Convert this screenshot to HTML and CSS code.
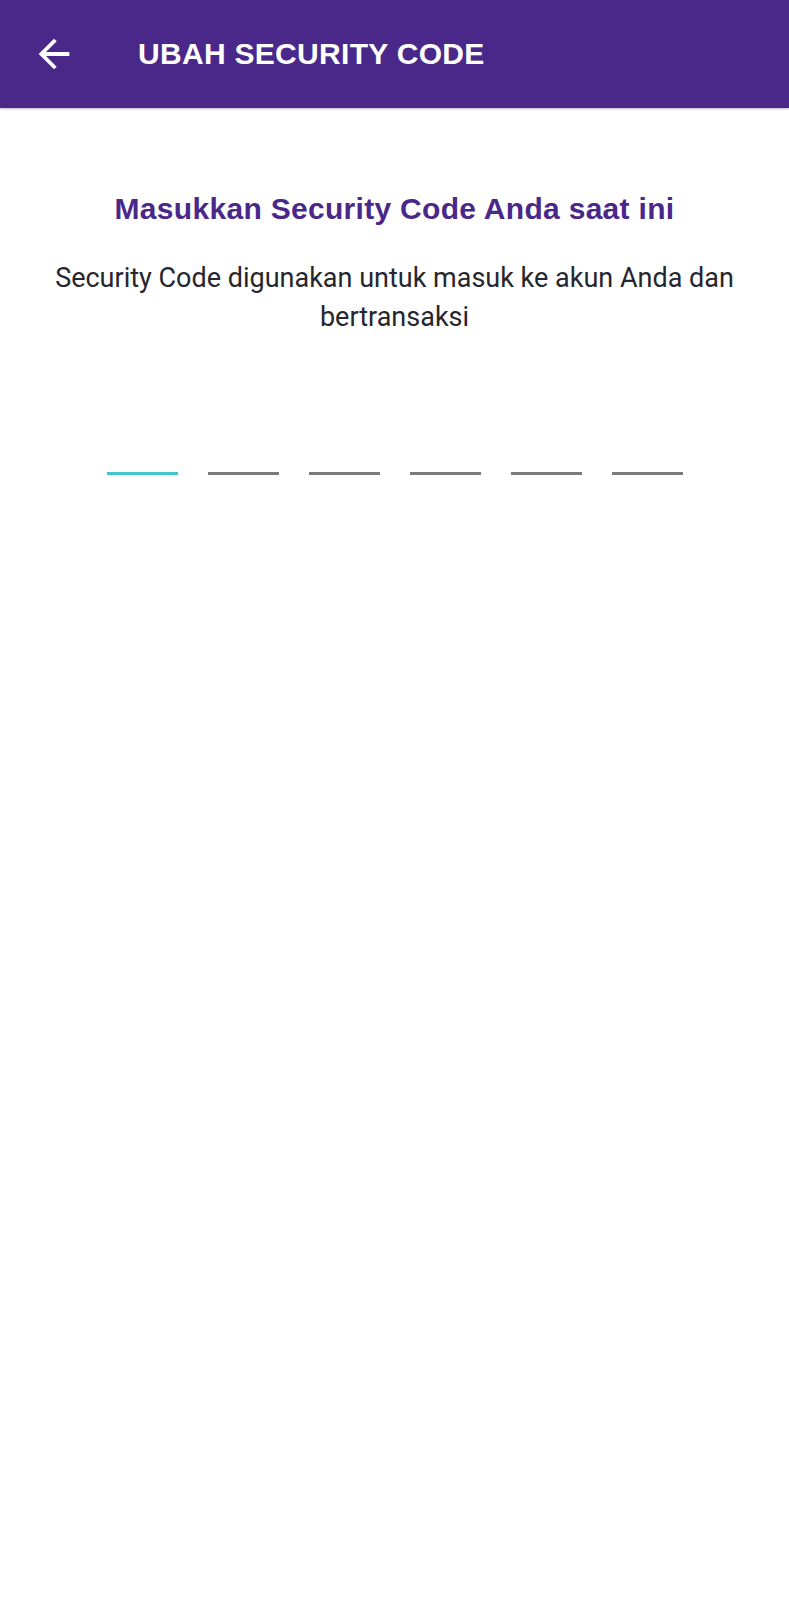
FILE: index.html
```html
<!DOCTYPE html>
<html lang="id">
<head>
<meta charset="utf-8">
<title>Ubah Security Code</title>
<link rel="stylesheet" href="styles.css">
</head>
<body>
<header class="appbar">
  <button class="back" aria-label="Kembali">
    <svg viewBox="0 0 24 24" width="46" height="46"><path d="M20 11H7.83l5.59-5.59L12 4l-8 8 8 8 1.41-1.41L7.83 13H20v-2z" fill="#fff"/></svg>
  </button>
  <h1 class="appbar-title">UBAH SECURITY CODE</h1>
</header>
<main class="content">
  <h2 class="heading">Masukkan Security Code Anda saat ini</h2>
  <p class="desc">Security Code digunakan untuk masuk ke akun Anda dan bertransaksi</p>
  <div class="pin">
    <span class="slot active"></span>
    <span class="slot"></span>
    <span class="slot"></span>
    <span class="slot"></span>
    <span class="slot"></span>
    <span class="slot"></span>
  </div>
</main>
</body>
</html>
```
FILE: styles.css
```css
html, body {
  margin: 0;
  padding: 0;
  background: #fff;
}
body {
  width: 789px;
  min-height: 1600px;
  font-family: Roboto, "Liberation Sans", sans-serif;
}
.appbar {
  height: 108px;
  background: #4a288a;
  display: flex;
  align-items: center;
  box-shadow: 0 1px 2px rgba(74, 40, 138, 0.35);
}
.back {
  background: none;
  border: 0;
  padding: 0;
  margin-left: 31px;
  width: 46px;
  height: 46px;
  display: flex;
  align-items: center;
  justify-content: center;
}
.back svg { display: block; }
.appbar-title {
  margin: 0 0 0 61px;
  color: #fff;
  font-family: "Liberation Sans", Arial, sans-serif;
  font-weight: 700;
  font-size: 30px;
  letter-spacing: 0.3px;
}
.content {
  display: flex;
  flex-direction: column;
  align-items: center;
  padding-top: 81px;
}
.heading {
  margin: 0;
  color: #4a288a;
  font-family: "Liberation Sans", Arial, sans-serif;
  font-weight: 700;
  font-size: 30px;
  letter-spacing: 0.3px;
  line-height: 40px;
}
.desc {
  margin: 30px 0 0;
  width: 730px;
  text-align: center;
  color: #26262e;
  font-size: 27px;
  line-height: 39px;
}
.pin {
  margin-top: 135px;
  display: flex;
  gap: 30px;
}
.slot {
  display: block;
  width: 71px;
  height: 3px;
  background: #7a7a7a;
}
.slot.active {
  background: #3ec6cc;
}
```
